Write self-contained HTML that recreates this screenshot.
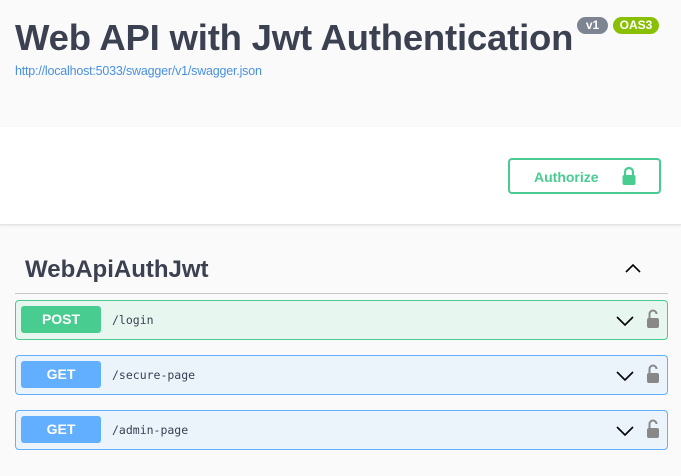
<!DOCTYPE html>
<html><head><style>
body{margin:0;width:681px;height:476px;background:#fafafa;font-family:"Liberation Sans",sans-serif;overflow:hidden;position:relative}
.a{position:absolute}
.t{left:15px;top:17px;font-size:36.5px;font-weight:bold;color:#3b4151;white-space:nowrap;letter-spacing:-0.2px}
.badge{top:17px;height:17px;border-radius:9px;color:#fff;font-size:12px;font-weight:bold;line-height:17px;text-align:center}
.url{left:15px;top:64px;font-size:12.5px;color:#4990e2;letter-spacing:-0.2px}
.band{left:0;top:127px;width:681px;height:97px;background:#fff;border-bottom:1px solid #e4e4e4;box-shadow:0 1px 2px rgba(0,0,0,.08)}
.auth{left:508px;top:158px;width:149px;height:32px;border:2px solid #49cc90;border-radius:4px;color:#49cc90;font-weight:bold;font-size:14px}
.tag{left:25px;top:256px;font-size:24px;font-weight:bold;color:#3b4151}
.hr{left:15px;top:293px;width:653px;height:1px;background:#c8c8c8}
.op{left:15px;width:651px;height:38px;border:1px solid;border-radius:4px}
.m{position:absolute;left:5px;top:5px;width:80px;height:27px;border-radius:3px;color:#fff;font-weight:bold;font-size:14px;line-height:27px;text-align:center}
.p{position:absolute;left:96px;top:12px;font-family:"DejaVu Sans Mono","Liberation Mono",monospace;font-size:11.5px;color:#3b4151}
</style></head><body>
<div class="a t">Web API with Jwt Authentication</div>
<div class="a badge" style="left:577px;width:31px;background:#7d8492">v1</div>
<div class="a badge" style="left:613px;width:46px;background:#89bf04">OAS3</div>
<div class="a url">http://localhost:5033/swagger/v1/swagger.json</div>
<div class="a band"></div>
<div class="a auth"><span class="a" style="left:24px;top:9px">Authorize</span>
<svg class="a" style="left:111px;top:6px" width="16" height="20" viewBox="0 0 16 20"><path d="M4 10V6a4 4 0 0 1 8 0v4" fill="none" stroke="#49cc90" stroke-width="2.2"/><rect x="1.5" y="9" width="13" height="10" rx="2" fill="#49cc90"/></svg></div>
<div class="a tag">WebApiAuthJwt</div>
<svg class="a" style="left:624px;top:262px" width="18" height="12" viewBox="0 0 18 12"><path d="M2 10L9 3l7 7" fill="none" stroke="#000" stroke-width="1.6"/></svg>
<div class="a hr"></div>

<div class="a op" style="top:300px;background:#e8f6f0;border-color:#49cc90"><div class="m" style="background:#49cc90">POST</div><div class="p">/login</div>
<svg class="a" style="left:599px;top:13px" width="20" height="14" viewBox="0 0 20 14"><path d="M2 3l8 8 8-8" fill="none" stroke="#000" stroke-width="1.6"/></svg>
<svg class="a" style="left:630px;top:8px" width="14" height="20" viewBox="0 0 14 20"><path d="M3.5 9V5a3.5 3.5 0 0 1 7 0" fill="none" stroke="#888" stroke-width="2"/><rect x="1" y="9" width="12" height="10" rx="2" fill="#888"/></svg></div>

<div class="a op" style="top:355px;background:#ebf3fb;border-color:#61affe"><div class="m" style="background:#61affe">GET</div><div class="p">/secure-page</div>
<svg class="a" style="left:599px;top:13px" width="20" height="14" viewBox="0 0 20 14"><path d="M2 3l8 8 8-8" fill="none" stroke="#000" stroke-width="1.6"/></svg>
<svg class="a" style="left:630px;top:8px" width="14" height="20" viewBox="0 0 14 20"><path d="M3.5 9V5a3.5 3.5 0 0 1 7 0" fill="none" stroke="#888" stroke-width="2"/><rect x="1" y="9" width="12" height="10" rx="2" fill="#888"/></svg></div>

<div class="a op" style="top:410px;background:#ebf3fb;border-color:#61affe"><div class="m" style="background:#61affe">GET</div><div class="p">/admin-page</div>
<svg class="a" style="left:599px;top:13px" width="20" height="14" viewBox="0 0 20 14"><path d="M2 3l8 8 8-8" fill="none" stroke="#000" stroke-width="1.6"/></svg>
<svg class="a" style="left:630px;top:8px" width="14" height="20" viewBox="0 0 14 20"><path d="M3.5 9V5a3.5 3.5 0 0 1 7 0" fill="none" stroke="#888" stroke-width="2"/><rect x="1" y="9" width="12" height="10" rx="2" fill="#888"/></svg></div>
</body></html>
